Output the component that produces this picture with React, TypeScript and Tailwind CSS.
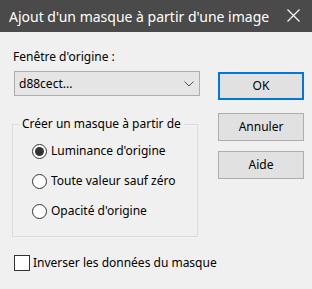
const font = { fontFamily: '"Noto Sans", "Open Sans", sans-serif' };

const Radio = ({ label, checked }: { label: string; checked?: boolean }) => (
	<div className="flex items-center h-4">
		<span className="w-[15px] h-[15px] rounded-full border border-[#333] bg-white flex items-center justify-center">
			{checked && <span className="w-[9px] h-[9px] rounded-full bg-[#333]" />}
		</span>
		<span className="ml-[4px] text-[12px] leading-4 text-black">{label}</span>
	</div>
);

const Btn = ({ label, primary }: { label: string; primary?: boolean }) => (
	<button
		className={
			primary
				? "w-[86px] h-[28px] bg-[#e1e1e1] border-2 border-[#0078d7] text-[12px] text-black"
				: "w-[86px] h-[28px] bg-[#e1e1e1] border border-[#adadad] text-[12px] text-black"
		}
	>
		{label}
	</button>
);

const App = () => {
	return (
		<div className="w-[312px] h-[289px] bg-[#f0f0f0] overflow-hidden" style={font}>
			<div className="h-8 bg-[#4a4a4a] flex items-center justify-between pl-[9px] pr-[12px]">
				<span className="text-[14px] text-white">Ajout d'un masque à partir d'une image</span>
				<svg width="13" height="13" viewBox="0 0 13 13" className="mb-[1px]">
					<path d="M0.5 0.5 L12.5 12.5 M12.5 0.5 L0.5 12.5" stroke="#fff" strokeWidth="1.1" />
				</svg>
			</div>
			<div className="flex pl-[12px]">
				<div className="w-[188px]">
					<p className="mt-[17px] ml-[1px] text-[12px] leading-4 text-black">Fenêtre d'origine :</p>
					<div className="mt-[6px] ml-[2px] w-[186px] h-[25px] bg-[#e5e5e5] border border-[#adadad] flex items-center justify-between pl-[4px] pr-[5px]">
						<span className="text-[12px] text-black">d88cect...</span>
						<svg width="10" height="6" viewBox="0 0 10 6">
							<path d="M0.5 0.5 L5 5 L9.5 0.5" stroke="#555" fill="none" strokeWidth="1" />
						</svg>
					</div>
					<fieldset className="mt-[20px] w-[186px] border border-[#dcdcdc]">
						<legend className="ml-[6px] px-[3px] text-[12px] leading-4 text-black whitespace-nowrap">
							Créer un masque à partir de
						</legend>
						<div className="pt-[11px] pb-[17px] pl-[19px] flex flex-col gap-[14px]">
							<Radio label="Luminance d'origine" checked />
							<Radio label="Toute valeur sauf zéro" />
							<Radio label="Opacité d'origine" />
						</div>
					</fieldset>
				</div>
				<div className="ml-[18px] mt-[40px] flex flex-col">
					<Btn label="OK" primary />
					<div className="mt-[13px]">
						<Btn label="Annuler" />
					</div>
					<div className="mt-[10px]">
						<Btn label="Aide" />
					</div>
				</div>
			</div>
			<div className="mt-[18px] ml-[14px] flex items-center">
				<span className="w-[16px] h-[16px] border border-[#333] bg-white" />
				<span className="ml-[3px] text-[12px] leading-4 text-black">Inverser les données du masque</span>
			</div>
		</div>
	);
};

export default App;
